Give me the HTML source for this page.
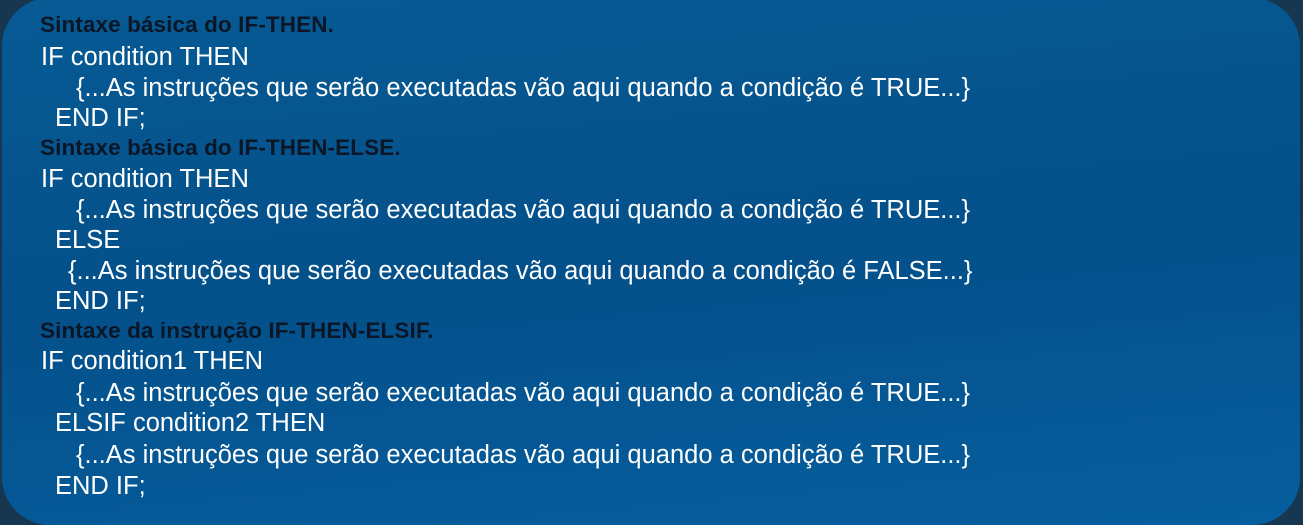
<!DOCTYPE html>
<html><head><meta charset="utf-8"><style>
html,body{margin:0;padding:0;width:1303px;height:523px;overflow:hidden;background:#16374f;}
.card{position:absolute;left:2px;top:-2px;width:1298px;height:527px;border-radius:48px;
background:linear-gradient(175deg,#075a94 0%,#04508a 50%,#065e9e 100%);}
.l{position:absolute;white-space:nowrap;font-family:"Liberation Sans",Arial,sans-serif;color:#fff;font-size:25.5px;line-height:28px;}
.h{color:#0b1626;font-weight:bold;font-size:22.5px;letter-spacing:0.1px;}
</style></head><body>
<div class="card"></div>
<div class="l h" style="left:40px;top:11px">Sintaxe básica do IF-THEN.</div>
<div class="l" style="left:41px;top:43px">IF condition THEN</div>
<div class="l" style="left:76px;top:74px">{...As instruções que serão executadas vão aqui quando a condição é TRUE...}</div>
<div class="l" style="left:55px;top:104px">END IF;</div>
<div class="l h" style="left:40px;top:134px">Sintaxe básica do IF-THEN-ELSE.</div>
<div class="l" style="left:41px;top:165px">IF condition THEN</div>
<div class="l" style="left:76px;top:196px">{...As instruções que serão executadas vão aqui quando a condição é TRUE...}</div>
<div class="l" style="left:55px;top:226px">ELSE</div>
<div class="l" style="left:68px;top:257px">{...As instruções que serão executadas vão aqui quando a condição é FALSE...}</div>
<div class="l" style="left:55px;top:287px">END IF;</div>
<div class="l h" style="left:40px;top:317px">Sintaxe da instrução IF-THEN-ELSIF.</div>
<div class="l" style="left:41px;top:347px">IF condition1 THEN</div>
<div class="l" style="left:76px;top:379px">{...As instruções que serão executadas vão aqui quando a condição é TRUE...}</div>
<div class="l" style="left:55px;top:409px">ELSIF condition2 THEN</div>
<div class="l" style="left:76px;top:441px">{...As instruções que serão executadas vão aqui quando a condição é TRUE...}</div>
<div class="l" style="left:55px;top:472px">END IF;</div>
</body></html>
